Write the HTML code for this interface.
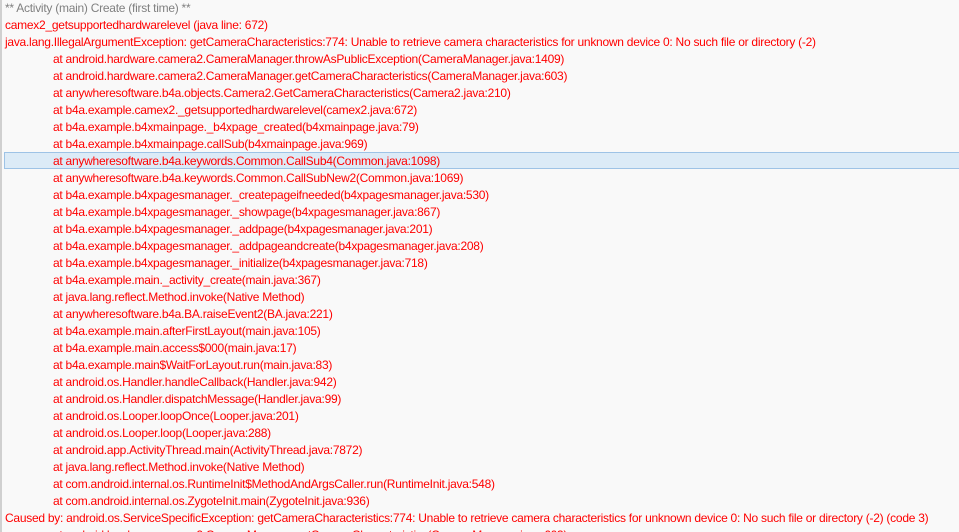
<!DOCTYPE html>
<html><head><meta charset="utf-8"><style>
html,body{margin:0;padding:0;background:#f9f9f9;width:959px;height:532px;overflow:hidden}
body{font-family:"Liberation Sans",sans-serif;font-size:12px;letter-spacing:-0.26px;color:#ff0000;position:relative}
.bl{position:absolute;left:0;top:0;width:2px;height:532px;background:#d0d0d0}
.l{position:absolute;left:5px;height:17px;line-height:17px;white-space:nowrap}
.i{left:53px}
.g{color:#808080}
.hl{position:absolute;left:4px;top:152px;width:960px;height:17px;background:#dcebf7;border:1px solid #9ec3e6;box-sizing:border-box}
</style></head><body>
<div class="bl"></div>
<div class="hl"></div>
<div class="l g" style="top:0">** Activity (main) Create (first time) **</div>
<div class="l" style="top:17px">camex2_getsupportedhardwarelevel (java line: 672)</div>
<div class="l" style="top:34px">java.lang.IllegalArgumentException: getCameraCharacteristics:774: Unable to retrieve camera characteristics for unknown device 0: No such file or directory (-2)</div>
<div class="l i" style="top:51px">at android.hardware.camera2.CameraManager.throwAsPublicException(CameraManager.java:1409)</div>
<div class="l i" style="top:68px">at android.hardware.camera2.CameraManager.getCameraCharacteristics(CameraManager.java:603)</div>
<div class="l i" style="top:85px">at anywheresoftware.b4a.objects.Camera2.GetCameraCharacteristics(Camera2.java:210)</div>
<div class="l i" style="top:102px">at b4a.example.camex2._getsupportedhardwarelevel(camex2.java:672)</div>
<div class="l i" style="top:119px">at b4a.example.b4xmainpage._b4xpage_created(b4xmainpage.java:79)</div>
<div class="l i" style="top:136px">at b4a.example.b4xmainpage.callSub(b4xmainpage.java:969)</div>
<div class="l i" style="top:153px">at anywheresoftware.b4a.keywords.Common.CallSub4(Common.java:1098)</div>
<div class="l i" style="top:170px">at anywheresoftware.b4a.keywords.Common.CallSubNew2(Common.java:1069)</div>
<div class="l i" style="top:187px">at b4a.example.b4xpagesmanager._createpageifneeded(b4xpagesmanager.java:530)</div>
<div class="l i" style="top:204px">at b4a.example.b4xpagesmanager._showpage(b4xpagesmanager.java:867)</div>
<div class="l i" style="top:221px">at b4a.example.b4xpagesmanager._addpage(b4xpagesmanager.java:201)</div>
<div class="l i" style="top:238px">at b4a.example.b4xpagesmanager._addpageandcreate(b4xpagesmanager.java:208)</div>
<div class="l i" style="top:255px">at b4a.example.b4xpagesmanager._initialize(b4xpagesmanager.java:718)</div>
<div class="l i" style="top:272px">at b4a.example.main._activity_create(main.java:367)</div>
<div class="l i" style="top:289px">at java.lang.reflect.Method.invoke(Native Method)</div>
<div class="l i" style="top:306px">at anywheresoftware.b4a.BA.raiseEvent2(BA.java:221)</div>
<div class="l i" style="top:323px">at b4a.example.main.afterFirstLayout(main.java:105)</div>
<div class="l i" style="top:340px">at b4a.example.main.access$000(main.java:17)</div>
<div class="l i" style="top:357px">at b4a.example.main$WaitForLayout.run(main.java:83)</div>
<div class="l i" style="top:374px">at android.os.Handler.handleCallback(Handler.java:942)</div>
<div class="l i" style="top:391px">at android.os.Handler.dispatchMessage(Handler.java:99)</div>
<div class="l i" style="top:408px">at android.os.Looper.loopOnce(Looper.java:201)</div>
<div class="l i" style="top:425px">at android.os.Looper.loop(Looper.java:288)</div>
<div class="l i" style="top:442px">at android.app.ActivityThread.main(ActivityThread.java:7872)</div>
<div class="l i" style="top:459px">at java.lang.reflect.Method.invoke(Native Method)</div>
<div class="l i" style="top:476px">at com.android.internal.os.RuntimeInit$MethodAndArgsCaller.run(RuntimeInit.java:548)</div>
<div class="l i" style="top:493px">at com.android.internal.os.ZygoteInit.main(ZygoteInit.java:936)</div>
<div class="l" style="top:510px">Caused by: android.os.ServiceSpecificException: getCameraCharacteristics:774: Unable to retrieve camera characteristics for unknown device 0: No such file or directory (-2) (code 3)</div>
<div class="l i" style="top:527px">at android.hardware.camera2.CameraManager.getCameraCharacteristics(CameraManager.java:603)</div>
</body></html>
